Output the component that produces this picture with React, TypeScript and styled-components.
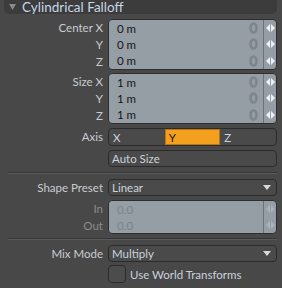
import React from 'react';
import styled, { createGlobalStyle } from 'styled-components';

const GlobalStyle = createGlobalStyle`
  body {
    margin: 0;
    background: #484848;
    font-family: Lato, "Liberation Sans", sans-serif;
    font-size: 11.5px;
  }
`;

const Panel = styled.div`
  width: 282px;
  height: 288px;
  background: #484848;
  overflow: hidden;
`;

const Header = styled.div`
  height: 14px;
  margin: 0 5px 0 4px;
  background: #3c3c3c;
  border-radius: 0 0 5px 5px;
  display: flex;
  align-items: center;
  gap: 6px;
  padding-left: 5px;
  color: #c6d6e6;
  font-size: 13.5px;
`;

const Row = styled.div<{ $mt: number }>`
  display: grid;
  grid-template-columns: 103px 1fr;
  column-gap: 5px;
  margin-top: ${(p) => p.$mt}px;
  padding-right: 5px;
`;

const Labels = styled.div`
  display: flex;
  flex-direction: column;
`;

const Label = styled.div<{ $dim?: boolean; $h?: number }>`
  height: ${(p) => p.$h ?? 17}px;
  line-height: ${(p) => p.$h ?? 17}px;
  text-align: right;
  color: ${(p) => (p.$dim ? '#8c8c8c' : '#c9ccd0')};
  white-space: nowrap;
`;

const GroupBox = styled.div<{ $rows: number }>`
  box-sizing: border-box;
  height: ${(p) => p.$rows * 17}px;
  background: #959da5;
  border: 1px solid #2e2e2e;
  border-radius: 4px;
  display: flex;
  flex-direction: column;
`;

const Line = styled.div`
  flex: 1;
  display: grid;
  grid-template-columns: 1fr 19px 13px;
  align-items: stretch;
`;

const Value = styled.span<{ $dis?: boolean }>`
  display: flex;
  align-items: center;
  padding-left: 8px;
  color: ${(p) => (p.$dis ? '#7b838b' : '#161616')};
`;

const Cell = styled.div`
  display: flex;
  align-items: center;
  justify-content: center;
`;

const Divider = styled(Cell)`
  box-sizing: border-box;
  border-left: 1px solid #6b7278;
`;

const DarkField = styled.div<{ $h?: number }>`
  box-sizing: border-box;
  height: ${(p) => p.$h ?? 17}px;
  border: 1px solid #2b2b2b;
  border-radius: 4px;
  background: #4a4a4a;
  color: #c9d3dd;
  display: flex;
  align-items: center;
  padding-left: 3px;
  justify-content: space-between;
`;

const Segments = styled.div`
  box-sizing: border-box;
  height: 18px;
  border: 1px solid #2b2b2b;
  border-radius: 4px;
  background: #4a4a4a;
  display: grid;
  grid-template-columns: 1fr 1fr 1fr;
  overflow: hidden;
`;

const Segment = styled.div<{ $on?: boolean }>`
  display: flex;
  align-items: center;
  padding-left: 4px;
  color: ${(p) => (p.$on ? '#1c1408' : '#c9d3dd')};
  background: ${(p) => (p.$on ? '#f3a01e' : 'transparent')};
  box-shadow: ${(p) => (p.$on ? 'inset 0 0 0 1px #b87410' : 'none')};
`;

const Separator = styled.div<{ $mt: number }>`
  margin: ${(p) => p.$mt}px 5px 0 8px;
  height: 1px;
  background: #5a5a5a;
  border-top: 1px solid #353535;
`;

const Check = styled.div`
  box-sizing: border-box;
  width: 18px;
  height: 18px;
  border: 1px solid #2b2b2b;
  border-radius: 4px;
  background: #4c4c4c;
`;

const CheckRow = styled.div`
  display: flex;
  align-items: center;
  gap: 4px;
  color: #c9d3dd;
`;

const Arrows = ({ dim }: { dim?: boolean }) => (
  <svg width="9" height="8" viewBox="0 0 9 8">
    <polygon points="4,0 4,8 0,4" fill={dim ? '#aab1b8' : '#eef1f4'} />
    <polygon points="5,0 5,8 9,4" fill={dim ? '#aab1b8' : '#eef1f4'} />
  </svg>
);

const Key = () => (
  <svg width="9" height="12" viewBox="0 0 9 12">
    <ellipse cx="4.5" cy="6" rx="3" ry="4.5" fill="none" stroke="#7f858b" strokeWidth="2.6" />
  </svg>
);

const DownArrow = () => (
  <svg width="8" height="5" viewBox="0 0 8 5" style={{ marginRight: 5 }}>
    <polygon points="0,0 8,0 4,5" fill="#d6dade" />
  </svg>
);

const VectorRow = ({ mt, labels, values }: { mt: number; labels: string[]; values: string[] }) => (
  <Row $mt={mt}>
    <Labels>
      {labels.map((l) => (
        <Label key={l}>{l}</Label>
      ))}
    </Labels>
    <GroupBox $rows={values.length}>
      {values.map((v, i) => (
        <Line key={+i}>
          <Value>{v}</Value>
          <Cell>
            <Key />
          </Cell>
          <Divider>
            <Arrows />
          </Divider>
        </Line>
      ))}
    </GroupBox>
  </Row>
);

const App = () => (
  <Panel>
    <GlobalStyle />
    <Header>
      <svg width="7" height="6" viewBox="0 0 7 6">
        <polygon points="0,0 7,0 3.5,6" fill="#8a8a8a" />
      </svg>
      Cylindrical Falloff
    </Header>
    <VectorRow mt={5} labels={['Center X', 'Y', 'Z']} values={['0 m', '0 m', '0 m']} />
    <VectorRow mt={3} labels={['Size X', 'Y', 'Z']} values={['1 m', '1 m', '1 m']} />
    <Row $mt={4}>
      <Label $h={18}>Axis</Label>
      <Segments>
        <Segment>X</Segment>
        <Segment $on>Y</Segment>
        <Segment>Z</Segment>
      </Segments>
    </Row>
    <Row $mt={4}>
      <div />
      <DarkField>Auto Size</DarkField>
    </Row>
    <Separator $mt={5} />
    <Row $mt={5}>
      <Label>Shape Preset</Label>
      <DarkField>
        Linear
        <DownArrow />
      </DarkField>
    </Row>
    <Row $mt={4}>
      <Labels>
        <Label $dim>In</Label>
        <Label $dim>Out</Label>
      </Labels>
      <GroupBox $rows={2}>
        {['0.0', '0.0'].map((v, i) => (
          <Line key={+i}>
            <Value $dis>{v}</Value>
            <span />
            <Divider>
              <Arrows dim />
            </Divider>
          </Line>
        ))}
      </GroupBox>
    </Row>
    <Separator $mt={4} />
    <Row $mt={5}>
      <Label>Mix Mode</Label>
      <DarkField>
        Multiply
        <DownArrow />
      </DarkField>
    </Row>
    <Row $mt={3}>
      <div />
      <CheckRow>
        <Check />
        Use World Transforms
      </CheckRow>
    </Row>
  </Panel>
);

export default App;
